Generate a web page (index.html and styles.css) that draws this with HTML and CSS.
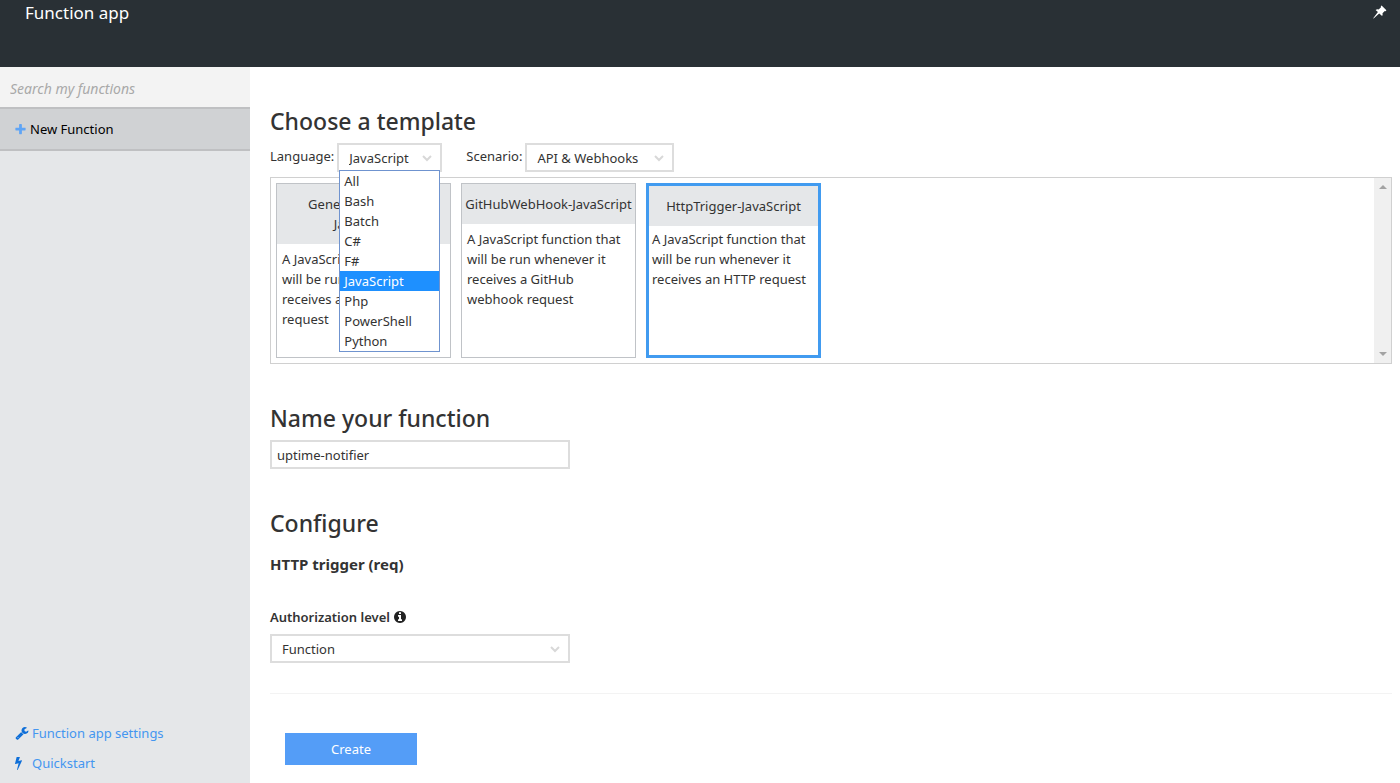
FILE: index.html
```html
<!DOCTYPE html>
<html lang="en">
<head>
<meta charset="utf-8">
<title>Function app</title>
<link rel="stylesheet" href="styles.css">
</head>
<body>
<div class="app">
  <header class="topbar">
    <h1 class="topbar-title">Function app</h1>
    <button class="pin" type="button" aria-label="Pin">
      <svg viewBox="0 0 14 14" width="14" height="14"><path fill="#fff" d="M8.6.6 13.4 5.2 12.6 6.2 11.8 5.9 9.5 8.2Q10 9.8 9.1 10.9L6.2 8.5.6 13.5.2 13.2 4.9 7 2.6 4.9Q4 3.9 5.6 4.4L8 2.2 7.8 1.3Z"/></svg>
    </button>
  </header>
  <div class="body">
    <nav class="sidebar">
      <input class="search" type="search" placeholder="Search my functions" aria-label="Search my functions">
      <button class="new-function" type="button">
        <svg class="icon" viewBox="0 0 1792 1792" width="13" height="13"><path fill="#60a5f5" d="M1600 736v192q0 40-28 68t-68 28h-416v416q0 40-28 68t-68 28h-192q-40 0-68-28t-28-68v-416h-416q-40 0-68-28t-28-68v-192q0-40 28-68t68-28h416v-416q0-40 28-68t68-28h192q40 0 68 28t28 68v416h416q40 0 68 28t28 68z"/></svg>
        <span>New Function</span>
      </button>
      <div class="side-links">
        <a class="side-link" href="#settings">
          <svg class="icon" viewBox="0 0 1792 1792" width="14" height="14"><path fill="#0f6fd8" d="M448 1472q0-26-19-45t-45-19-45 19-19 45 19 45 45 19 45-19 19-45zm644-420l-682 682q-37 37-90 37-52 0-91-37l-106-108q-38-36-38-90 0-53 38-91l681-681q39 98 114.5 173.5t173.5 114.5zm634-435q0 39-23 106-47 134-164.5 217.5t-258.5 83.5q-185 0-316.5-131.5t-131.5-316.5 131.5-316.5 316.5-131.5q58 0 121.5 16.5t107.5 46.5q16 11 16 28t-16 28l-293 169v224l193 107q5-3 79-48.5t135.5-81 70.5-35.5q15 0 23.5 10t8.5 25z"/></svg>
          <span>Function app settings</span>
        </a>
        <a class="side-link" href="#quickstart">
          <svg class="icon" viewBox="448 0 1792 1792" width="14" height="14"><path fill="#0f6fd8" d="M1333 566q18 20 7 44l-540 1157q-13 25-42 25-4 0-14-2-17-5-25.5-19t-4.5-30l197-808-406 101q-4 1-12 1-18 0-31-11-18-15-13-39l201-825q4-14 16-23t28-9h328q19 0 32 12.5t13 29.5q0 8-5 18l-171 463 396-98q8-2 12-2 19 0 34 15z"/></svg>
          <span>Quickstart</span>
        </a>
      </div>
    </nav>
    <main class="main">
      <h2 class="heading">Choose a template</h2>
      <div class="filters">
        <div class="filter">
          <label for="language">Language:</label>
          <div class="select-wrap language">
            <select class="select" id="language"><option>JavaScript</option></select>
            <svg class="chevron" viewBox="0 0 10 7" width="10" height="7"><path d="M1 1 5 5 9 1"/></svg>
            <ul class="menu" role="listbox" aria-label="Language">
              <li role="option">All</li>
              <li role="option">Bash</li>
              <li role="option">Batch</li>
              <li role="option">C#</li>
              <li role="option">F#</li>
              <li role="option" class="active" aria-selected="true">JavaScript</li>
              <li role="option">Php</li>
              <li role="option">PowerShell</li>
              <li role="option">Python</li>
            </ul>
          </div>
        </div>
        <div class="filter">
          <label for="scenario">Scenario:</label>
          <div class="select-wrap scenario">
            <select class="select" id="scenario"><option>API &amp; Webhooks</option></select>
            <svg class="chevron" viewBox="0 0 10 7" width="10" height="7"><path d="M1 1 5 5 9 1"/></svg>
          </div>
        </div>
      </div>
      <div class="templates">
        <div class="cards">
          <article class="card">
            <h3 class="card-title">GenericWebHook-<br>JavaScript</h3>
            <p class="card-text">A JavaScript function that will be run whenever it receives a webhook request</p>
          </article>
          <article class="card">
            <h3 class="card-title">GitHubWebHook-JavaScript</h3>
            <p class="card-text">A JavaScript function that will be run whenever it receives a GitHub webhook request</p>
          </article>
          <article class="card selected">
            <h3 class="card-title">HttpTrigger-JavaScript</h3>
            <p class="card-text">A JavaScript function that will be run whenever it receives an HTTP request</p>
          </article>
        </div>
        <div class="scroll-track">
          <svg viewBox="0 0 8 4" width="8" height="4"><path fill="#a3a3a3" d="M0 4 4 0 8 4Z"/></svg>
          <svg viewBox="0 0 8 4" width="8" height="4"><path fill="#a3a3a3" d="M0 0 4 4 8 0Z"/></svg>
        </div>
      </div>

      <h2 class="heading section"><label for="name">Name your function</label></h2>
      <input class="text-input" id="name" type="text" value="uptime-notifier">

      <h2 class="heading section">Configure</h2>
      <h3 class="subheading">HTTP trigger (req)</h3>
      <div class="auth-label">
        <label for="auth">Authorization level</label>
        <svg viewBox="128 128 1536 1536" width="12" height="12"><path fill="#222" d="M1152 1376v-160q0-14-9-23t-23-9h-96v-512q0-14-9-23t-23-9h-320q-14 0-23 9t-9 23v160q0 14 9 23t23 9h96v320h-96q-14 0-23 9t-9 23v160q0 14 9 23t23 9h448q14 0 23-9t9-23zm-128-896v-160q0-14-9-23t-23-9h-192q-14 0-23 9t-9 23v160q0 14 9 23t23 9h192q14 0 23-9t9-23zm640 416q0 209-103 385.5t-279.5 279.5-385.5 103-385.5-103-279.5-279.5-103-385.5 103-385.5 279.5-279.5 385.5-103 385.5 103 279.5 279.5 103 385.5z"/></svg>
      </div>
      <div class="select-wrap auth">
        <select class="select" id="auth"><option>Function</option></select>
        <svg class="chevron" viewBox="0 0 10 7" width="10" height="7"><path d="M1 1 5 5 9 1"/></svg>
      </div>
      <hr class="rule">
      <button class="create" type="button">Create</button>
    </main>
  </div>
</div>
</body>
</html>
```
FILE: styles.css
```css
* {
  box-sizing: border-box;
}

body {
  margin: 0;
  background: #fff;
  color: #333;
  font: 13px/20px "Noto Sans", "Open Sans", sans-serif;
}

h1, h2, h3, p, ul {
  margin: 0;
  padding: 0;
}

input, select, button {
  font: inherit;
  color: inherit;
}

.app {
  display: flex;
  flex-direction: column;
  min-height: 100vh;
}

.topbar {
  display: flex;
  align-items: flex-start;
  justify-content: space-between;
  height: 67px;
  padding: 0 13px 0 25px;
  background: #293035;
  color: #fff;
}

.topbar-title {
  font-size: 17px;
  font-weight: 400;
  line-height: 26px;
}

.pin {
  display: flex;
  padding: 5px 0;
  border: 0;
  background: none;
}

.body {
  display: flex;
  flex: 1;
}

.sidebar {
  display: flex;
  flex-direction: column;
  flex: none;
  width: 250px;
  background: #e5e7e9;
}

.search {
  appearance: none;
  height: 40px;
  padding: 2px 10px 0;
  border: 0;
  border-radius: 0;
  outline: 0;
  background: #f3f3f3;
  font-size: 14px;
}

.search::placeholder {
  color: #a9a9a9;
  font-style: italic;
  opacity: 1;
}

.new-function {
  display: flex;
  align-items: center;
  gap: 3px;
  height: 44px;
  padding: 0 14px;
  border: 2px solid #bfc0c2;
  border-width: 2px 0;
  background: #d0d2d4;
  color: #000;
}

.side-links {
  display: flex;
  flex-direction: column;
  gap: 10px;
  margin-top: auto;
  padding: 0 15px 10px;
}

.side-link {
  display: flex;
  align-items: center;
  gap: 3px;
  color: #4496f0;
  text-decoration: none;
}

.icon {
  flex: none;
}

.main {
  flex: 1;
  min-width: 0;
  padding: 39px 8px 18px 20px;
}

.heading {
  font-size: 23px;
  font-weight: 500;
  line-height: 30px;
}

.section {
  margin: 39px 0 7px;
}

.filters {
  display: flex;
  gap: 24px;
  margin: 7px 0 5px;
}

.filter {
  display: flex;
  gap: 3px;
  line-height: 26px;
}

.select-wrap {
  position: relative;
  height: 29px;
}

.language {
  width: 105px;
}

.scenario {
  width: 149px;
}

.auth {
  width: 300px;
}

.select {
  appearance: none;
  display: block;
  width: 100%;
  height: 100%;
  padding: 0 10px;
  border: 2px solid #ddd;
  border-radius: 0;
  background: #fff;
  line-height: 20px;
}

.chevron {
  position: absolute;
  top: 12px;
  right: 10px;
  fill: none;
  stroke: #d8d8d8;
  stroke-width: 2;
  pointer-events: none;
}

.menu {
  position: absolute;
  z-index: 1;
  top: 27px;
  left: 2px;
  width: 101px;
  border: 1px solid #6f93cf;
  background: #fff;
  line-height: 20px;
  list-style: none;
}

.menu li {
  padding: 0 4px;
}

.menu .active {
  background: #1e90ff;
  color: #fff;
}

.templates {
  display: flex;
  justify-content: space-between;
  border: 1px solid #d0d0d0;
}

.cards {
  display: flex;
  flex-wrap: wrap;
  gap: 10px;
  padding: 5px;
}

.card {
  width: 175px;
  height: 175px;
  border: 1px solid #c0c3c7;
}

.card-title {
  padding: 10px 0;
  background: #e5e7e9;
  font-size: 13px;
  font-weight: 400;
  text-align: center;
}

.card-text {
  padding: 5px;
}

.card.selected {
  border: 3px solid #419bf0;
}

.selected .card-text {
  padding: 3px;
}

.scroll-track {
  display: flex;
  flex-direction: column;
  align-items: center;
  justify-content: space-between;
  width: 17px;
  padding: 7px 0;
  background: #f0f0f0;
}

.text-input {
  display: block;
  width: 300px;
  height: 29px;
  padding: 0 5px;
  border: 2px solid #ddd;
  border-radius: 0;
}

.subheading {
  margin: 16px 0 33px;
  font-size: 15px;
  font-weight: 700;
}

.auth-label {
  display: flex;
  align-items: center;
  gap: 4px;
  margin-bottom: 7px;
  font-weight: 600;
}

.rule {
  margin: 30px 0 39px;
  border: 0;
  border-top: 1px solid #f3f3f3;
}

.create {
  display: block;
  width: 132px;
  height: 32px;
  margin-left: 15px;
  border: 0;
  background: #549df7;
  color: #fff;
}
```
